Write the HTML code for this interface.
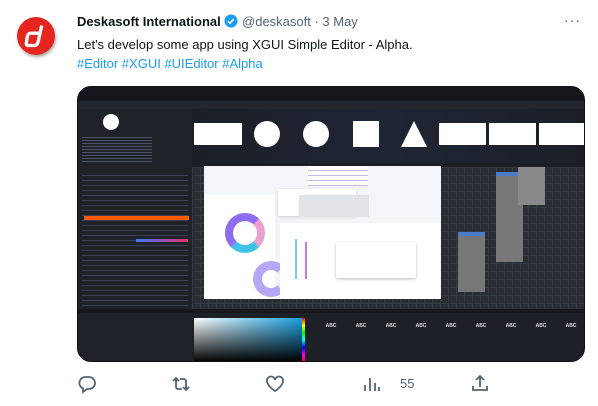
<!DOCTYPE html>
<html><head><meta charset="utf-8"><style>
*{margin:0;padding:0;box-sizing:border-box}
body{width:598px;height:406px;background:#fff;font-family:"Liberation Sans",sans-serif;position:relative;overflow:hidden}
.a{position:absolute}
.hdr{left:77px;top:14px;font-size:13px;color:#0f1419;white-space:nowrap}
.txt{left:77px;top:37px;font-size:13px;color:#0f1419}
.tags{left:77px;top:56px;font-size:13px;color:#1d9bf0}
.img{left:77px;top:86px;width:508px;height:276px;border-radius:14px;overflow:hidden;background:#1b1e25;border:1px solid #111}
.ic{fill:none;stroke:#536471;stroke-width:1.8}
</style></head><body>
<div class="a" style="left:17px;top:17px;width:38px;height:38px;border-radius:50%;background:#e5261e;box-shadow:1px 2px 3px rgba(0,0,0,.35)">
<svg width="38" height="38" viewBox="0 0 40 40"><path d="M26 9 L22 27 Q21 30 18 30 L12 30 Q9 30 10 26 L11 20 Q12 17 15 17 L23 17" fill="none" stroke="#fff" stroke-width="3.5"/></svg></div>
<div class="a hdr"><b>Deskasoft International</b> <svg width="14" height="14" viewBox="0 0 16 16" style="vertical-align:-2px"><circle cx="8" cy="8" r="7.5" fill="#1d9bf0"/><path d="M4.5 8.2l2.3 2.2 4.5-4.6" stroke="#fff" stroke-width="1.8" fill="none"/></svg> <span style="color:#536471">@deskasoft · 3 May</span></div>
<div class="a" style="left:564px;top:12px;color:#536471;font-size:14px;letter-spacing:1px">···</div>
<div class="a txt">Let's develop some app using XGUI Simple Editor - Alpha.</div>
<div class="a tags">#Editor #XGUI #UIEditor #Alpha</div>

<div class="a img">
 <div class="a" style="left:0;top:0;width:508px;height:14px;background:#15171c"></div>
 <div class="a" style="left:0;top:14px;width:508px;height:8px;background:#23262d"></div>
 <div class="a" style="left:0;top:22px;width:114px;height:216px;background:#1f2229"></div>
 <div class="a" style="left:25px;top:27px;width:16px;height:16px;border-radius:50%;background:#fff"></div>
 <div class="a" style="left:4px;top:48px;width:70px;height:28px;background:repeating-linear-gradient(#1f2229 0 2px,#4a5266 2px 3px)"></div>
 <div class="a" style="left:4px;top:84px;width:106px;height:150px;background:repeating-linear-gradient(#1f2229 0 4px,#3b4150 4px 5px)"></div>
 <div class="a" style="left:6px;top:129px;width:105px;height:4px;background:#ff5a00"></div>
 <div class="a" style="left:58px;top:152px;width:52px;height:3px;background:linear-gradient(90deg,#3a7bff,#e0306a)"></div>
 <div class="a" style="left:115px;top:22px;width:393px;height:54px;background:linear-gradient(90deg,#1c1f26,#1e2535,#1c1f26)"></div>
 <div class="a" style="left:116px;top:36px;width:48px;height:22px;background:#fff"></div>
 <div class="a" style="left:176px;top:34px;width:26px;height:26px;border-radius:50%;background:#fff"></div>
 <div class="a" style="left:225px;top:34px;width:26px;height:26px;border-radius:50%;background:#fff"></div>
 <div class="a" style="left:275px;top:34px;width:26px;height:26px;background:#fff"></div>
 <div class="a" style="left:323px;top:34px;width:0;height:0;border-left:13px solid transparent;border-right:13px solid transparent;border-bottom:26px solid #fff"></div>
 <div class="a" style="left:361px;top:36px;width:47px;height:22px;background:#fff"></div>
 <div class="a" style="left:411px;top:36px;width:47px;height:22px;background:#fff"></div>
 <div class="a" style="left:461px;top:36px;width:47px;height:22px;background:#fff"></div>
 <div class="a" style="left:114px;top:80px;width:394px;height:142px;background:#2a2d33;background-image:linear-gradient(#353941 1px,transparent 1px),linear-gradient(90deg,#353941 1px,transparent 1px);background-size:8px 8px"></div>
 <div class="a" style="left:126px;top:79px;width:237px;height:133px;background:#f4f5f8"></div>
 <div class="a" style="left:127px;top:108px;width:70px;height:104px;background:#fff"></div>
 <div class="a" style="left:147px;top:126px;width:40px;height:40px;border-radius:50%;border:8px solid #8d6cf0;border-right-color:#e9a1d0;border-bottom-color:#41c0e8"></div>
 <div class="a" style="left:175px;top:174px;width:36px;height:36px;border-radius:50%;border:9px solid #b7a6f3;border-right-color:#ebe7fb"></div>
 <div class="a" style="left:200px;top:102px;width:78px;height:27px;background:#fff;box-shadow:0 1px 3px #ccc"></div>
 <div class="a" style="left:221px;top:108px;width:70px;height:22px;background:#e2e4e8"></div>
 <div class="a" style="left:230px;top:79px;width:60px;height:20px;background:repeating-linear-gradient(#fff 0 4px,#c8b8f0 4px 5px)"></div>
 <div class="a" style="left:202px;top:136px;width:160px;height:76px;background:#fff"></div>
 <div class="a" style="left:258px;top:155px;width:80px;height:36px;background:#fff;box-shadow:0 1px 3px #bbb"></div>
 <div class="a" style="left:217px;top:152px;width:2px;height:40px;background:#7fc8f0"></div>
 <div class="a" style="left:227px;top:155px;width:2px;height:37px;background:#c07be0"></div>
 <div class="a" style="left:418px;top:85px;width:27px;height:90px;background:#777;border-top:4px solid #4a7cc8"></div>
 <div class="a" style="left:380px;top:145px;width:27px;height:60px;background:#777;border-top:4px solid #4a7cc8"></div>
 <div class="a" style="left:440px;top:80px;width:27px;height:38px;background:#888"></div>
 <div class="a" style="left:0;top:222px;width:508px;height:4px;background:#15171c"></div>
 <div class="a" style="left:0;top:226px;width:114px;height:50px;background:#1f2229"></div>
 <div class="a" style="left:114px;top:226px;width:394px;height:50px;background:#1d2027"></div>
 <div class="a" style="left:116px;top:231px;width:108px;height:44px;background:linear-gradient(to bottom,transparent,#000),linear-gradient(90deg,#fff,#1aa0e0)"></div>
 <div class="a" style="left:224px;top:231px;width:3px;height:44px;background:linear-gradient(red,yellow,lime,cyan,blue,magenta,red)"></div>
 <div class="a" style="left:238px;top:236px;width:270px;font-size:5px;color:#ddd;font-weight:bold;display:flex;justify-content:space-around">
 <span>ABC</span><span>ABC</span><span>ABC</span><span>ABC</span><span>ABC</span><span>ABC</span><span>ABC</span><span>ABC</span><span>ABC</span></div>
</div>

<svg class="a" style="left:77px;top:374px" width="20" height="20" viewBox="0 0 20 20"><path class="ic" d="M8 3h4a6 6 0 0 1 0 12h-2l-4 3v-3.5A6 6 0 0 1 8 3z"/></svg>
<svg class="a" style="left:171px;top:374px" width="20" height="20" viewBox="0 0 20 20"><path class="ic" d="M2 7l3-3 3 3M5 4v9a2 2 0 0 0 2 2h4M18 13l-3 3-3-3M15 16V7a2 2 0 0 0-2-2H9"/></svg>
<svg class="a" style="left:265px;top:374px" width="20" height="20" viewBox="0 0 20 20"><path class="ic" d="M10 17S2 12 2 7a4 4 0 0 1 8-1 4 4 0 0 1 8 1c0 5-8 10-8 10z"/></svg>
<svg class="a" style="left:362px;top:374px" width="20" height="20" viewBox="0 0 20 20"><path class="ic" d="M3 17v-6M8 17V4M13 17V9M17 17v-4"/></svg>
<div class="a" style="left:400px;top:376px;font-size:13px;color:#536471">55</div>
<svg class="a" style="left:470px;top:373px" width="20" height="20" viewBox="0 0 20 20"><path class="ic" d="M10 3v11M6 7l4-4 4 4M3 13v4h14v-4"/></svg>
</body></html>
